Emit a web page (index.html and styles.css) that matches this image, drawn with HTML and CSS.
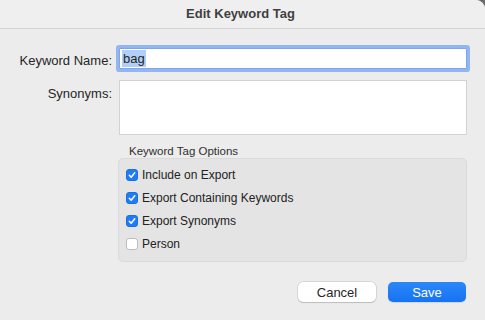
FILE: index.html
```html
<!DOCTYPE html>
<html lang="en">
<head>
    <meta charset="UTF-8">
    <title>Edit Keyword Tag</title>
    <link rel="stylesheet" href="styles.css">
</head>
<body>
    <div class="dialog">
        <div class="title-bar">Edit Keyword Tag</div>

        <div class="dialog-body">
            <div class="form-grid">
                <label class="field-label">Keyword Name:</label>
                <div class="text-field focused"><span class="selection">bag</span></div>

                <label class="field-label synonyms-label">Synonyms:</label>
                <div class="text-area"></div>
            </div>

            <div class="options">
                <div class="options-title">Keyword Tag Options</div>
                <div class="options-box">
                    <div class="check-row">
                        <span class="checkbox checked">
                            <svg viewBox="0 0 12 12" width="12" height="12"><path d="M2.8 6.3 L5 8.6 L9.3 3.3" fill="none" stroke="#fff" stroke-width="1.8" stroke-linecap="round" stroke-linejoin="round"/></svg>
                        </span>
                        <span>Include on Export</span>
                    </div>
                    <div class="check-row">
                        <span class="checkbox checked">
                            <svg viewBox="0 0 12 12" width="12" height="12"><path d="M2.8 6.3 L5 8.6 L9.3 3.3" fill="none" stroke="#fff" stroke-width="1.8" stroke-linecap="round" stroke-linejoin="round"/></svg>
                        </span>
                        <span>Export Containing Keywords</span>
                    </div>
                    <div class="check-row">
                        <span class="checkbox checked">
                            <svg viewBox="0 0 12 12" width="12" height="12"><path d="M2.8 6.3 L5 8.6 L9.3 3.3" fill="none" stroke="#fff" stroke-width="1.8" stroke-linecap="round" stroke-linejoin="round"/></svg>
                        </span>
                        <span>Export Synonyms</span>
                    </div>
                    <div class="check-row">
                        <span class="checkbox"></span>
                        <span>Person</span>
                    </div>
                </div>
            </div>

            <div class="button-row">
                <button class="btn btn-cancel">Cancel</button>
                <button class="btn btn-save">Save</button>
            </div>
        </div>
    </div>
</body>
</html>
```

FILE: styles.css
```css
* {
    margin: 0;
    padding: 0;
    box-sizing: border-box;
}

html {
    background: #6b6b6b;
}

body {
    font-family: "Liberation Sans", Arial, sans-serif;
    font-size: 13px;
    color: #262626;
}

.dialog {
    width: 485px;
    height: 320px;
    background: #ececec;
    border-top-right-radius: 9px;
    overflow: hidden;
}

.title-bar {
    height: 29px;
    line-height: 28px;
    text-align: center;
    font-weight: bold;
    font-size: 13px;
    color: #3f3f3f;
    background: #efefef;
    border-bottom: 1px solid #d3d3d3;
    padding-right: 4px;
}

.dialog-body {
    padding: 19px 18px 0 0;
}

.form-grid {
    display: grid;
    grid-template-columns: 112px 1fr;
    column-gap: 7px;
    row-gap: 11px;
}

.field-label {
    text-align: right;
    line-height: 21px;
    height: 21px;
    padding-top: 2px;
}

.synonyms-label {
    padding-top: 3px;
}

.text-field {
    height: 21px;
    background: #fff;
    border: 1px solid #c4c4c4;
    padding: 1px 0 0 2px;
    line-height: 17px;
    font-size: 13px;
}

.text-field.focused {
    border-color: #7fa6ea;
    box-shadow: 0 0 0 3px #92b5f3;
    border-radius: 1px;
}

.selection {
    background: #b2d0f7;
    padding: 1px;
}

.text-area {
    height: 55px;
    width: 348px;
    background: #fff;
    border: 1px solid #d2d2d2;
}

.options {
    margin: 9px 0 0 118px;
}

.options-title {
    font-size: 11.5px;
    line-height: 14px;
    padding-left: 11px;
    color: #2f2f2f;
}

.options-box {
    width: 349px;
    background: #e4e4e4;
    border: 1px solid #dadada;
    border-radius: 5px;
    padding: 4px 0 6px 7px;
}

.check-row {
    display: flex;
    align-items: center;
    gap: 4px;
    height: 23px;
    font-size: 12px;
    color: #222;
}

.checkbox {
    width: 12px;
    height: 12px;
    border-radius: 3px;
    background: #fff;
    border: 1px solid #bdbdbd;
    display: flex;
    align-items: center;
    justify-content: center;
}

.checkbox.checked {
    background: #1f7bf6;
    border-color: #1a6fe0;
}

.checkbox svg {
    display: block;
}

.button-row {
    display: flex;
    justify-content: flex-end;
    gap: 12px;
    margin-top: 20px;
    padding-right: 1px;
}

.btn {
    width: 78px;
    height: 20px;
    border-radius: 5px;
    font-family: "Liberation Sans", Arial, sans-serif;
    font-size: 13px;
    border: none;
}

.btn-cancel {
    background: #fff;
    color: #262626;
    box-shadow: 0 0 0 0.5px rgba(0, 0, 0, 0.18), 0 1px 1px rgba(0, 0, 0, 0.12);
}

.btn-save {
    background: linear-gradient(#2b87f8, #1673f2);
    color: #fff;
    box-shadow: 0 1px 1px rgba(0, 0, 0, 0.1);
}
```
